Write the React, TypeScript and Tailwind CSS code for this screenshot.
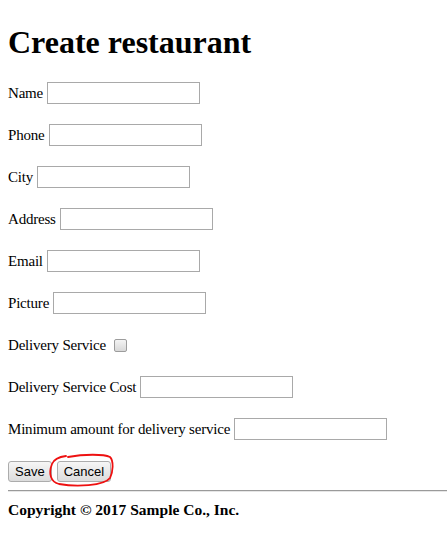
import React from "react";

const fields = ["Name", "Phone", "City", "Address", "Email", "Picture"];

const Row: React.FC<{ children: React.ReactNode }> = ({ children }) => (
  <div className="flex items-center gap-[4px] h-[26px] mb-[16px]">{children}</div>
);

const TextInput = () => (
  <input type="text" className="w-[153px] h-[22px] border border-[#a9a9a9] bg-white px-[2px] outline-none" />
);

export default function App() {
  return (
    <main className="bg-white min-h-[548px] px-2 text-black" style={{ fontFamily: '"Liberation Serif", "Times New Roman", serif' }}>
      <h1 className="pt-[24px] text-[32px] leading-[37px] font-bold mb-[19px]">Create restaurant</h1>
      <form className="text-[15px] tracking-[-0.2px]">
        {fields.map(f => (
          <Row key={f}>
            <span>{f}</span>
            <TextInput />
          </Row>
        ))}
        <Row>
          <span>Delivery Service</span>
          <input
            type="checkbox"
            className="appearance-none ml-[4px] w-[13px] h-[13px] rounded-[2px] border border-[#9c9c9c] bg-gradient-to-b from-[#f4f4f4] to-[#d8d8d8]"
          />
        </Row>
        <Row>
          <span>Delivery Service Cost</span>
          <TextInput />
        </Row>
        <Row>
          <span>Minimum amount for delivery service</span>
          <TextInput />
        </Row>
        <div className="relative flex items-center gap-[5px] h-[26px] tracking-normal" style={{ fontFamily: '"Liberation Sans", Arial, sans-serif' }}>
          <button
            type="submit"
            className="h-[21px] px-[6px] text-[13px] leading-none border border-[#acacac] rounded-[3px] bg-gradient-to-b from-[#f6f6f6] to-[#dcdcdc]"
            onClick={e => e.preventDefault()}
          >
            Save
          </button>
          <button
            type="button"
            className="h-[21px] px-[6px] text-[13px] leading-none border border-[#acacac] rounded-[3px] bg-gradient-to-b from-[#f6f6f6] to-[#dcdcdc]"
          >
            Cancel
          </button>
          {/* hand-drawn red circle around Cancel */}
          <svg className="absolute left-[36px] top-[-8px] pointer-events-none" width="76" height="42" viewBox="0 0 76 42">
            <path
              d="M24 7 C40 4 60 4 66 7 C70 11 69 22 66 28 C60 36 32 37 15 34 C7 32 4 24 8 14 C10 9 14 7 22 6"
              fill="none"
              stroke="#ee1111"
              strokeWidth="1.8"
              strokeLinecap="round"
            />
          </svg>
        </div>
      </form>
      <hr className="mt-[6px] -mr-2 border-0 border-t border-t-[#9a9a9a] border-b border-b-[#e6e6e6]" />
      <p className="mt-[6px] text-[15.5px] font-bold">Copyright © 2017 Sample Co., Inc.</p>
    </main>
  );
}
